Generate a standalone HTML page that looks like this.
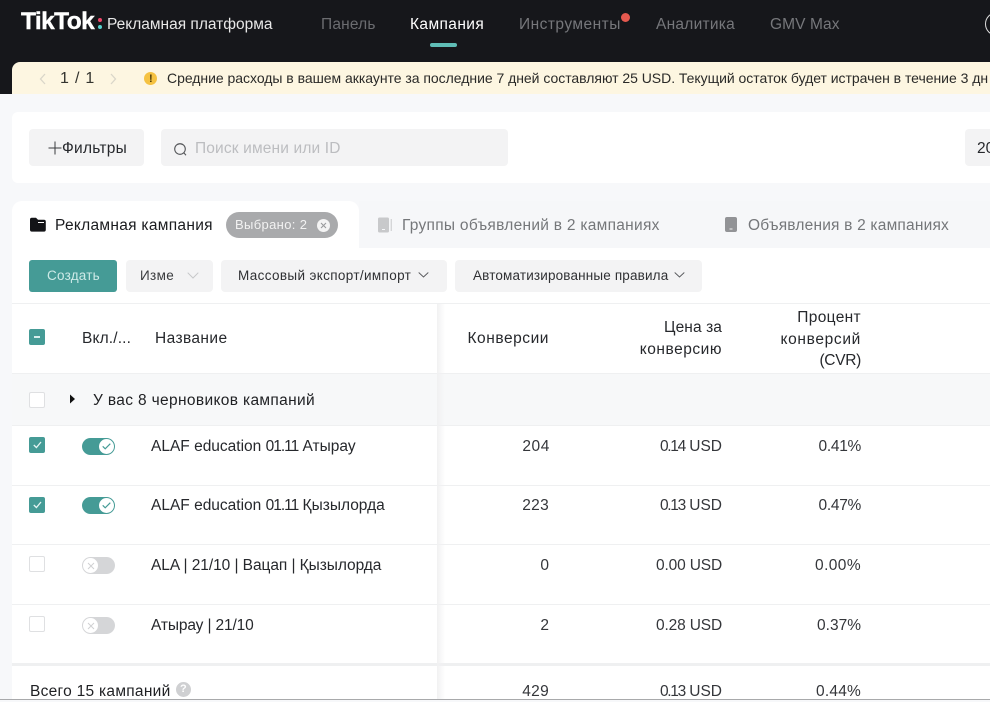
<!DOCTYPE html>
<html lang="ru"><head><meta charset="utf-8"><title>TikTok</title>
<style>
html,body{margin:0;padding:0}
body{width:990px;height:700px;overflow:hidden;position:relative;background:#f7f8fa;font-family:"Liberation Sans",sans-serif;color:#26282c}
.a{position:absolute}
.t{position:absolute;white-space:nowrap;font-size:15.5px;line-height:20px;letter-spacing:0}
.r{text-align:right}
.n{color:#34363a}
.d{letter-spacing:-1.3px}
.e{letter-spacing:-1px}
.b{position:absolute;background:#f3f3f4;border-radius:4px}
.l{position:absolute;left:12px;width:978px;height:1px;background:#eff0f1}
svg{position:absolute;display:block;overflow:visible}
.cb{position:absolute;left:29px;width:16px;height:16px;box-sizing:border-box;border-radius:2px;background:#fff;border:1.5px solid #dfe0e2}
.cb.on{background:#459b96;border:0}
.sw{position:absolute;left:82px;width:33px;height:17px;border-radius:9px}
.sw.on{background:#459b96}.sw.off{background:#d5d6d8}
.kn{position:absolute;top:1px;width:15px;height:15px;border-radius:50%;background:#fff}
.sw.on .kn{left:17px}.sw.off .kn{left:1px}
</style></head><body>
<div class="a" style="left:0;top:0;width:990px;height:94px;background:#16171b"></div>
<div class="t" style="left:21px;top:8px;font-size:24.5px;line-height:28px;font-weight:bold;color:#fff;letter-spacing:-.6px;-webkit-text-stroke:.4px #fff">TikTok</div>
<div class="a" style="left:98px;top:18px;width:4px;height:4px;border-radius:50%;background:#f0466a"></div>
<div class="a" style="left:98px;top:25px;width:4px;height:4px;border-radius:50%;background:#56d3cf"></div>
<div class="t" style="left:107px;top:15px;color:#e8e8e8">Рекламная платформа</div>
<div class="t" style="left:321px;top:15px;color:#6b6c70;letter-spacing:.18px">Панель</div>
<div class="t" style="left:410px;top:15px;color:#fff;letter-spacing:.4px">Кампания</div>
<div class="a" style="left:430px;top:43px;width:27px;height:4px;border-radius:2px;background:#5fbdb6"></div>
<div class="t" style="left:519px;top:15px;color:#76777b;letter-spacing:.47px">Инструменты</div>
<div class="a" style="left:621px;top:13px;width:9px;height:9px;border-radius:50%;background:#e5594f"></div>
<div class="t" style="left:656px;top:15px;color:#76777b;letter-spacing:.25px">Аналитика</div>
<div class="t" style="left:770px;top:15px;color:#76777b;letter-spacing:.1px">GMV Max</div>
<div class="a" style="left:985px;top:12px;width:24px;height:24px;box-sizing:border-box;border:1.5px solid #ddd;border-radius:50%"></div>

<div class="a" style="left:12px;top:62px;width:978px;height:33px;background:#fdf6e1;border-radius:8px 0 0 0"></div>
<div class="a" style="left:0;top:94px;width:990px;height:18px;background:#f7f8fa"></div>
<svg style="left:38px;top:73px" width="10" height="12" viewBox="0 0 10 12" fill="none" stroke="#d9d6c9" stroke-width="1.3"><path d="M7 1 2.5 6 7 11"/></svg>
<div class="t" style="left:60px;top:69px;font-size:16px;letter-spacing:.8px;color:#34342f">1 / 1</div>
<svg style="left:108px;top:73px" width="10" height="12" viewBox="0 0 10 12" fill="none" stroke="#d9d6c9" stroke-width="1.3"><path d="M3 1 7.5 6 3 11"/></svg>
<div class="a" style="left:144px;top:72px;width:13px;height:13px;border-radius:50%;background:#f5c242"></div>
<div class="t" style="left:149px;top:71px;font-size:11px;line-height:16px;font-weight:bold;color:#4d3c08;letter-spacing:0">!</div>
<div class="t" style="left:167px;top:68px;font-size:14px;letter-spacing:-.03px;color:#2a2a28">Средние расходы в вашем аккаунте за последние 7 дней составляют 25 USD. Текущий остаток будет истрачен в течение 3 дн</div>

<div class="a" style="left:12px;top:112px;width:978px;height:71px;background:#fff;border-radius:6px 0 0 6px"></div>
<div class="b" style="left:29px;top:129px;width:115px;height:37px"></div>
<svg style="left:48px;top:141px" width="14" height="14" viewBox="0 0 14 14" stroke="#3a3b3e" stroke-width="1"><path d="M7 .5v13M.5 7h13"/></svg>
<div class="t" style="left:62px;top:139px;letter-spacing:.25px">Фильтры</div>
<div class="b" style="left:161px;top:129px;width:347px;height:37px"></div>
<svg style="left:173px;top:142px" width="15" height="15" viewBox="0 0 15 15" fill="none" stroke="#55575a" stroke-width="1.1"><circle cx="7" cy="7" r="5.3"/><path d="M4.500 2.600A5 5 0 0 1 9.500 2.600M10.800 10.800 13 13.200"/></svg>
<div class="t" style="left:195px;top:139px;color:#bcbdc0;letter-spacing:.15px">Поиск имени или ID</div>
<div class="b" style="left:965px;top:129px;width:60px;height:37px"></div>
<div class="t" style="left:977px;top:139px">20</div>

<div class="a" style="left:359px;top:201px;width:631px;height:47px;background:#f6f7f9;border-radius:0"></div>
<div class="a" style="left:12px;top:201px;width:347px;height:60px;background:#fff;border-radius:10px 10px 0 0"></div>
<div class="a" style="left:12px;top:248px;width:978px;height:452px;background:#fff"></div>
<div class="a" style="left:359px;top:201px;width:12px;height:47px;background:#f6f7f9;border-radius:0 0 0 10px"></div>
<svg style="left:30px;top:217px" width="16" height="15" viewBox="0 0 16 15"><path fill="#131417" d="M0 2.5A1.8 1.8 0 0 1 1.8.7H6L8 2.8h6a1.8 1.8 0 0 1 1.8 1.8v8.2A1.8 1.800 0 0 1 14 14.600H1.800A1.800 1.800 0 0 1 0 12.800z"/><path d="M8 5.500h6" stroke="#fff" stroke-width="1"/></svg>
<div class="t" style="left:55px;top:216px;letter-spacing:.3px;color:#1a1b1e">Рекламная кампания</div>
<div class="a" style="left:226px;top:212px;width:112px;height:26px;border-radius:13px;background:#a9aaac"></div>
<div class="t" style="left:235px;top:215px;font-size:13px;color:#f2f2f2;letter-spacing:.35px">Выбрано: 2</div>
<div class="a" style="left:317px;top:219px;width:13px;height:13px;border-radius:50%;background:#f4f4f4"></div>
<svg style="left:320px;top:222px" width="7" height="7" viewBox="0 0 7 7" stroke="#9a9b9d" stroke-width="1.1"><path d="M1 1 6 6M6 1 1 6"/></svg>
<svg style="left:378px;top:217px" width="15" height="16" viewBox="0 0 15 16"><rect width="11" height="15" y=".5" rx="1.5" fill="#c8c9cb"/><path d="M4 12.500h3" stroke="#f6f7f9" stroke-width="1"/><rect x="12.600" y="2" width="1.400" height="12" fill="#d5d6d8"/></svg>
<div class="t" style="left:402px;top:216px;color:#75777a;letter-spacing:.28px">Группы объявлений в 2 кампаниях</div>
<svg style="left:725px;top:217px" width="12" height="15" viewBox="0 0 12 15"><rect width="12" height="15" rx="2" fill="#929396"/><path d="M4.500 12h3" stroke="#f0f0f0" stroke-width="1"/></svg>
<div class="t" style="left:748px;top:216px;color:#75777a;letter-spacing:.2px">Объявления в 2 кампаниях</div>

<div class="a" style="left:29px;top:260px;width:88px;height:32px;border-radius:3px;background:#459b96"></div>
<div class="t" style="left:47px;top:266px;font-size:13.5px;color:#cdeae7;letter-spacing:.23px">Создать</div>
<div class="b" style="left:126px;top:260px;width:87px;height:32px"></div>
<div class="t" style="left:140px;top:266px;font-size:13.5px;letter-spacing:.35px;color:#3a3b3e">Изме</div>
<svg style="left:187px;top:272px" width="12" height="7" viewBox="0 0 12 7" fill="none" stroke="#c6c7c9" stroke-width="1"><path d="M.7.7 6 6 11.300.7"/></svg>
<div class="b" style="left:221px;top:260px;width:226px;height:32px"></div>
<div class="t" style="left:238px;top:266px;font-size:13.5px;letter-spacing:.36px;color:#2f3033">Массовый экспорт/импорт</div>
<svg style="left:418px;top:272px" width="11" height="6" viewBox="0 0 11 6" fill="none" stroke="#55565a" stroke-width=".9"><path d="M.7.5 5.500 5 10.300.5"/></svg>
<div class="b" style="left:455px;top:260px;width:247px;height:32px"></div>
<div class="t" style="left:473px;top:266px;font-size:13.5px;letter-spacing:.16px;color:#2f3033">Автоматизированные правила</div>
<svg style="left:674px;top:272px" width="11" height="6" viewBox="0 0 11 6" fill="none" stroke="#55565a" stroke-width=".9"><path d="M.7.5 5.500 5 10.300.5"/></svg>

<div class="l" style="top:303px"></div>
<div class="a" style="left:12px;top:374px;width:978px;height:52px;background:#f7f8f9"></div>
<div class="l" style="top:373px"></div><div class="l" style="top:425px"></div>
<div class="l" style="top:485px"></div><div class="l" style="top:544px"></div><div class="l" style="top:604px"></div>
<div class="a" style="left:12px;top:663px;width:978px;height:3px;background:#eff0f1"></div>
<div class="a" style="left:437px;top:304px;width:8px;height:396px;background:linear-gradient(90deg,#f1f1f2,rgba(245,245,246,0))"></div>

<div class="cb on" style="top:329px"></div>
<div class="a" style="left:34px;top:336px;width:6px;height:2px;background:#d8eeec"></div>
<div class="t" style="left:82px;top:329px;letter-spacing:.15px">Вкл./...</div>
<div class="t" style="left:155px;top:329px;letter-spacing:.4px">Название</div>
<div class="t r" style="right:441px;top:329px;letter-spacing:.55px">Конверсии</div>
<div class="t r" style="right:268px;top:318px;letter-spacing:.1px">Цена за</div>
<div class="t r" style="right:268px;top:340px;letter-spacing:.53px">конверсию</div>
<div class="t r" style="right:129px;top:308px;letter-spacing:.34px">Процент</div>
<div class="t r" style="right:129px;top:330px;letter-spacing:.67px">конверсий</div>
<div class="t r" style="right:129px;top:351px;letter-spacing:-.3px">(CVR)</div>

<div class="cb" style="top:392px"></div>
<svg style="left:69px;top:394px" width="7" height="10" viewBox="0 0 7 10"><path fill="#111" d="M1 .5 6 5 1 9.500z"/></svg>
<div class="t" style="left:93px;top:391px;letter-spacing:.35px;color:#1f2023">У вас 8 черновиков кампаний</div>

<div class="cb on" style="top:437px"></div>
<svg style="left:33px;top:441px" width="9" height="8" viewBox="0 0 9 8" fill="none" stroke="#e6f4f3" stroke-width="1.3"><path d="M.8 4 3.400 6.500 8 1"/></svg>
<div class="sw on" style="top:438px"><div class="kn"></div><svg style="left:20px;top:5px" width="9" height="7" viewBox="0 0 9 7" fill="none" stroke="#459b96" stroke-width="1.2"><path d="M.7 3.300 3.200 5.800 8.300.7"/></svg></div>
<div class="t" style="left:151px;top:437px">ALAF education <span class="e">01.11</span> Атырау</div>
<div class="t r n" style="right:440px;top:437px;letter-spacing:.6px">204</div>
<div class="t r n" style="right:268px;top:437px"><span class="d">0.14</span> USD</div>
<div class="t r n" style="right:129px;top:437px;letter-spacing:-.3px">0.41%</div>

<div class="cb on" style="top:497px"></div>
<svg style="left:33px;top:501px" width="9" height="8" viewBox="0 0 9 8" fill="none" stroke="#e6f4f3" stroke-width="1.3"><path d="M.8 4 3.400 6.500 8 1"/></svg>
<div class="sw on" style="top:497px"><div class="kn"></div><svg style="left:20px;top:5px" width="9" height="7" viewBox="0 0 9 7" fill="none" stroke="#459b96" stroke-width="1.2"><path d="M.7 3.300 3.200 5.800 8.300.7"/></svg></div>
<div class="t" style="left:151px;top:496px">ALAF education <span class="e">01.11</span> Қызылорда</div>
<div class="t r n" style="right:441px;top:496px;letter-spacing:.3px">223</div>
<div class="t r n" style="right:268px;top:496px"><span class="d">0.13</span> USD</div>
<div class="t r n" style="right:129px;top:496px;letter-spacing:-.3px">0.47%</div>

<div class="cb" style="top:556px"></div>
<div class="sw off" style="top:557px"><div class="kn"></div><svg style="left:4.500px;top:4.500px" width="8" height="8" viewBox="0 0 8 8" stroke="#d0d1d3" stroke-width="1"><path d="M1 1 7 7M7 1 1 7"/></svg></div>
<div class="t" style="left:151px;top:556px;letter-spacing:-.06px">ALA | 21/10 | Вацап | Қызылорда</div>
<div class="t r n" style="right:441px;top:556px">0</div>
<div class="t r n" style="right:268px;top:556px;letter-spacing:-.15px">0.00 USD</div>
<div class="t r n" style="right:129px;top:556px;letter-spacing:.4px">0.00%</div>

<div class="cb" style="top:616px"></div>
<div class="sw off" style="top:617px"><div class="kn"></div><svg style="left:4.500px;top:4.500px" width="8" height="8" viewBox="0 0 8 8" stroke="#d0d1d3" stroke-width="1"><path d="M1 1 7 7M7 1 1 7"/></svg></div>
<div class="t" style="left:151px;top:616px;letter-spacing:-.13px">Атырау | 21/10</div>
<div class="t r n" style="right:441px;top:616px">2</div>
<div class="t r n" style="right:268px;top:616px;letter-spacing:-.15px">0.28 USD</div>
<div class="t r n" style="right:129px;top:616px">0.37%</div>

<div class="t" style="left:30px;top:682px;letter-spacing:.28px;color:#1f2023">Всего 15 кампаний</div>
<div class="a" style="left:176px;top:682px;width:15px;height:15px;border-radius:50%;background:#cfd0d2"></div>
<div class="t" style="left:180px;top:682px;font-size:11px;line-height:15px;color:#fff;letter-spacing:0;font-weight:bold">?</div>
<div class="t r n" style="right:441px;top:682px;letter-spacing:.3px">429</div>
<div class="t r n" style="right:268px;top:682px"><span class="d">0.13</span> USD</div>
<div class="t r n" style="right:129px;top:682px;letter-spacing:.2px">0.44%</div>
<div class="a" style="left:0;top:699px;width:990px;height:1px;background:#a8a9ab"></div>
</body></html>
